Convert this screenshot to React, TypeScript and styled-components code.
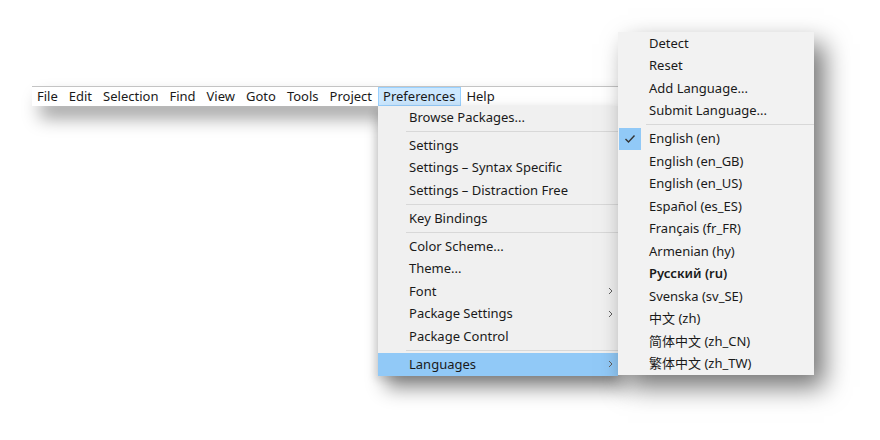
import React from "react";
import styled, { createGlobalStyle } from "styled-components";

const Global = createGlobalStyle`
  html, body { margin: 0; padding: 0; background: #ffffff; }
  body {
    font-family: "Noto Sans", "Noto Sans CJK SC", sans-serif;
    font-size: 13px;
    color: #1a1a1a;
  }
`;

const Page = styled.div`
  width: 880px;
  height: 440px;
  padding: 86px 0 0 32px;
  box-sizing: border-box;
  overflow: hidden;
`;

const MenuBar = styled.div`
  position: relative;
  display: flex;
  align-items: stretch;
  width: 588px;
  height: 20px;
  box-sizing: border-box;
  border-top: 1px solid #c4c4c4;
  background: #ffffff;
  box-shadow: 8px 12px 18px rgba(0, 0, 0, 0.38);
`;

const BarItem = styled.div<{ $active?: boolean }>`
  position: relative;
  display: flex;
  align-items: center;
  padding: 0 5.5px;
  line-height: 19px;
  box-sizing: border-box;
  background: ${(p) => (p.$active ? "#cce8ff" : "transparent")};
  outline: ${(p) => (p.$active ? "1px solid #99d1ff" : "none")};
  outline-offset: -1px;
  &:first-child {
    padding-left: 5px;
  }
`;

const Menu = styled.div`
  position: absolute;
  top: 100%;
  left: 0;
  width: 240px;
  background: #f0f0f0;
  box-shadow: 8px 12px 18px rgba(0, 0, 0, 0.45), -3px 4px 8px rgba(0, 0, 0, 0.12);
  z-index: 2;
`;

const SubMenu = styled.div`
  position: absolute;
  top: -74px;
  left: 240px;
  width: 196px;
  background: #f2f2f2;
  box-shadow: 10px 12px 24px rgba(0, 0, 0, 0.55);
  z-index: 3;
`;

const Item = styled.div<{ $hl?: boolean; $bold?: boolean }>`
  position: relative;
  display: flex;
  align-items: center;
  height: 22.5px;
  padding-left: 31.5px;
  white-space: nowrap;
  background: ${(p) => (p.$hl ? "#91c9f7" : "transparent")};
  font-weight: ${(p) => (p.$bold ? 600 : 400)};
`;

const Sep = styled.div`
  height: 5.5px;
  display: flex;
  align-items: center;
  padding-left: 28px;
  &::after {
    content: "";
    flex: 1;
    height: 1px;
    background: #d8d8d8;
  }
`;

const Arrow = styled.svg`
  position: absolute;
  right: 5px;
  top: 50%;
  margin-top: -4px;
  width: 5px;
  height: 8px;
`;

const CheckBox = styled.div`
  position: absolute;
  left: 1px;
  top: 0;
  width: 22px;
  height: 22px;
  background: #91c9f7;
  display: flex;
  align-items: center;
  justify-content: center;
`;

const Chevron = () => (
  <Arrow viewBox="0 0 5 8">
    <polyline points="1,1 4,4 1,7" fill="none" stroke="#606060" strokeWidth="1" />
  </Arrow>
);

const Check = () => (
  <CheckBox>
    <svg width="12" height="10" viewBox="0 0 12 10">
      <polyline points="1.5,5 4.5,8 10.5,1.5" fill="none" stroke="#333" strokeWidth="1.4" />
    </svg>
  </CheckBox>
);

const bar = ["File", "Edit", "Selection", "Find", "View", "Goto", "Tools", "Project"];

const langs: { t: string; bold?: boolean }[] = [
  { t: "English (en_GB)" },
  { t: "English (en_US)" },
  { t: "Español (es_ES)" },
  { t: "Français (fr_FR)" },
  { t: "Armenian (hy)" },
  { t: "Русский (ru)", bold: true },
  { t: "Svenska (sv_SE)" },
  { t: "中文 (zh)" },
  { t: "简体中文 (zh_CN)" },
  { t: "繁体中文 (zh_TW)" },
];

export default function App() {
  return (
    <Page>
      <Global />
      <MenuBar>
        {bar.map((b) => (
          <BarItem key={b}>{b}</BarItem>
        ))}
        <BarItem $active>
          Preferences
          <Menu>
            <Item>Browse Packages...</Item>
            <Sep />
            <Item>Settings</Item>
            <Item>Settings – Syntax Specific</Item>
            <Item>Settings – Distraction Free</Item>
            <Sep />
            <Item>Key Bindings</Item>
            <Sep />
            <Item>Color Scheme...</Item>
            <Item>Theme...</Item>
            <Item>
              Font
              <Chevron />
            </Item>
            <Item>
              Package Settings
              <Chevron />
            </Item>
            <Item>Package Control</Item>
            <Sep />
            <Item $hl>
              Languages
              <Chevron />
            </Item>
            <SubMenu>
              <Item>Detect</Item>
              <Item>Reset</Item>
              <Item>Add Language...</Item>
              <Item>Submit Language...</Item>
              <Sep />
              <Item>
                <Check />
                English (en)
              </Item>
              {langs.map((l) => (
                <Item key={l.t} $bold={l.bold}>
                  {l.t}
                </Item>
              ))}
            </SubMenu>
          </Menu>
        </BarItem>
        <BarItem>Help</BarItem>
      </MenuBar>
    </Page>
  );
}
